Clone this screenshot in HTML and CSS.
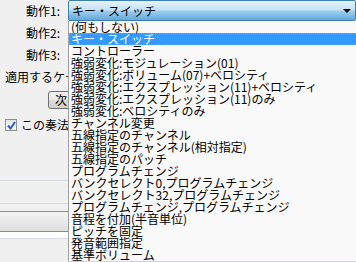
FILE: index.html
```html
<!DOCTYPE html>
<html lang="ja">
<head>
  <meta charset="UTF-8">
  <title>奏法設定</title>
  <link rel="stylesheet" href="styles.css">
</head>
<body>
  <div class="panel">
    <div class="row">
      <span class="label">動作1:</span>
      <div class="select">
        <span class="select-text">キー・スイッチ</span>
        <span class="arrow"></span>
      </div>
    </div>
    <div class="row">
      <span class="label">動作2:</span>
    </div>
    <div class="row">
      <span class="label">動作3:</span>
    </div>
    <div class="row wide"><span class="clip">適用するケース</span></div>
    <div class="row btn-row">
      <div class="clip btn-clip"><button class="btn">次の音符</button></div>
    </div>
    <div class="row check-row">
      <span class="check">
        <svg width="9" height="9" viewBox="0 0 9 9"><path d="M1 4.5 L3.5 7.5 L8 1" fill="none" stroke="#2a5fc4" stroke-width="2"/></svg>
      </span>
      <span class="clip check-clip">この奏法を</span>
    </div>

    <div class="lower">
      <div class="line l1"></div>
      <div class="line l2"></div>
      <div class="bar"></div>
      <div class="line l3"></div>
    </div>

    <ul class="dropdown">
      <li>(何もしない)</li>
      <li class="selected">キー・スイッチ</li>
      <li>コントローラー</li>
      <li>強弱変化:モジュレーション(01)</li>
      <li>強弱変化:ボリューム(07)+ベロシティ</li>
      <li>強弱変化:エクスプレッション(11)+ベロシティ</li>
      <li>強弱変化:エクスプレッション(11)のみ</li>
      <li>強弱変化:ベロシティのみ</li>
      <li>チャンネル変更</li>
      <li>五線指定のチャンネル</li>
      <li>五線指定のチャンネル(相対指定)</li>
      <li>五線指定のパッチ</li>
      <li>プログラムチェンジ</li>
      <li>バンクセレクト0,プログラムチェンジ</li>
      <li>バンクセレクト32,プログラムチェンジ</li>
      <li>プログラムチェンジ,プログラムチェンジ</li>
      <li>音程を付加(半音単位)</li>
      <li>ピッチを固定</li>
      <li>発音範囲指定</li>
      <li>基準ボリューム</li>
    </ul>
  </div>
</body>
</html>
```

FILE: styles.css
```css
* { margin: 0; padding: 0; box-sizing: border-box; }
body {
  font-family: "Noto Sans CJK JP", "DejaVu Sans", sans-serif;
  font-size: 12px;
  color: #000;
  background: #f0f0f0;
  width: 356px;
  height: 262px;
  overflow: hidden;
}
.panel { position: relative; width: 356px; height: 262px; }
.row { display: flex; align-items: center; height: 22px; white-space: nowrap; }
.label { width: 61px; text-align: right; padding-right: 1px; flex: none; line-height: 12px; }
.clip { overflow: hidden; white-space: nowrap; line-height: 12px; }
.select {
  position: relative;
  margin-left: 7px;
  width: 300px;
  height: 21px;
  margin-top: -1px;
  border: 1px solid #3c7fb1;
  border-radius: 2px;
  background: linear-gradient(#e6f3fc, #c6e3f7 45%, #9ccdee 55%, #62a9dc);
  display: flex;
  align-items: center;
  padding-left: 3px;
  line-height: 12px;
}
.arrow {
  position: absolute;
  left: 274px;
  top: 8px;
  border-left: 4px solid transparent;
  border-right: 4px solid transparent;
  border-top: 4px solid #000;
}
.wide { padding-left: 5px; height: 21px; }
.wide .clip { width: 63px; }
.btn-row { padding-left: 48px; height: 26px; }
.btn-clip { width: 20px; height: 18px; }
.btn {
  font-family: inherit;
  font-size: 12px;
  height: 18px;
  padding: 0 6px;
  border: 1px solid #707070;
  border-radius: 3px;
  background: linear-gradient(#f2f2f2, #ebebeb 50%, #dddddd 50%, #cfcfcf);
  line-height: 12px;
}
.check-row { padding-left: 5px; gap: 4px; height: 24px; }
.check-clip { width: 47px; }
.check {
  width: 12px; height: 12px;
  flex: none;
  border: 1px solid #8e8f8f;
  background: linear-gradient(#e8e8e8, #fafafa);
  display: flex; align-items: center; justify-content: center;
}
.lower { position: absolute; left: 0; top: 180px; width: 356px; }
.line { height: 1px; }
.l1 { background: #d5dae3; margin-bottom: 22px; }
.l2 { background: #d5dae3; margin-bottom: 7px; }
.bar {
  height: 21px;
  border-top: 1px solid #8c8c8c;
  border-bottom: 1px solid #8c8c8c;
  background: linear-gradient(#f4f4f4, #dedede);
}
.l3 { background: #ffffff; height: 7px; border-bottom: 1px solid #d5dae3; }

.dropdown {
  position: absolute;
  left: 68px;
  top: 21px;
  width: 300px;
  height: 241px;
  list-style: none;
  background: #f9f9f9;
  border-left: 1px solid #a0a0a0;
  border-bottom: 1px solid #cdd6e2;
}
.dropdown li { height: 12px; line-height: 12px; padding-left: 2px; white-space: nowrap; }
.dropdown li.selected {
  background: #3399ff;
  color: #fff;
  outline: 1px dotted #e0903a;
  outline-offset: -1px;
}
```
